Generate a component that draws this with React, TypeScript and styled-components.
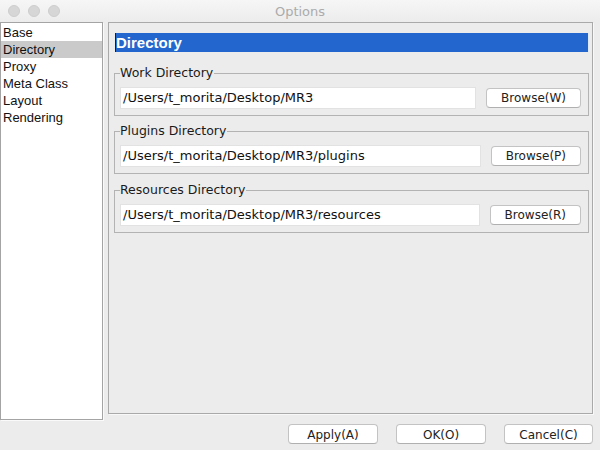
import React from "react";
import styled, { createGlobalStyle } from "styled-components";

const Global = createGlobalStyle`
  html, body { margin: 0; padding: 0; background: #ececec; }
  body { font-family: "DejaVu Sans", "Liberation Sans", sans-serif; }
  * { box-sizing: border-box; }
`;

const Window = styled.div`
  width: 600px;
  height: 450px;
  display: flex;
  flex-direction: column;
  background: #ececec;
  overflow: hidden;
`;

const TitleBar = styled.div`
  height: 22px;
  flex: none;
  display: flex;
  align-items: center;
  position: relative;
  background: linear-gradient(#f6f6f6, #ececec);
`;

const Lights = styled.div`
  display: flex;
  gap: 8px;
  padding-left: 8px;
`;

const Light = styled.span`
  width: 12px;
  height: 12px;
  border-radius: 50%;
  background: #d6d6d6;
  border: 1px solid #cdcdcd;
`;

const Title = styled.div`
  position: absolute;
  left: 0;
  right: 0;
  top: 4px;
  text-align: center;
  font-family: "DejaVu Sans", sans-serif;
  font-size: 13px;
  color: #ababab;
`;

const Body = styled.div`
  flex: none;
  height: 398px;
  display: flex;
  gap: 5px;
`;

const List = styled.ul`
  width: 103px;
  flex: none;
  margin: 0;
  padding: 1px 0 0 0;
  list-style: none;
  background: #fff;
  border: 1px solid #a4a4a4;
  box-shadow: 1px 1px 0 #fafafa;
`;

const Item = styled.li<{ $selected?: boolean }>`
  height: 17px;
  line-height: 17px;
  padding-left: 2px;
  font-family: "Liberation Sans", sans-serif;
  font-size: 13px;
  color: #111;
  background: ${(p) => (p.$selected ? "#cacaca" : "transparent")};
`;

const Panel = styled.div`
  width: 485px;
  height: 392px;
  flex: none;
  border: 1px solid #a9a9a9;
  box-shadow: 1px 1px 0 #f8f8f8;
  padding: 10px 3px 0 5px;
  display: flex;
  flex-direction: column;
`;

const Header = styled.div`
  height: 19px;
  margin-left: 1px;
  background: #2367ce;
  border-left: 1px solid #0c1f45;
  border-right: 1px solid #dfe8f7;
  color: #fff;
  font-family: "Liberation Sans", sans-serif;
  font-weight: bold;
  font-size: 15px;
  line-height: 19px;
  margin-bottom: 14px;
`;

const Group = styled.fieldset<{ $gap?: number }>`
  margin: 0 0 ${(p) => p.$gap ?? 0}px 0;
  padding: 0 7px 6px 5px;
  border: 1px solid #b3b3b3;
  min-width: 0;
`;

const Legend = styled.legend`
  padding: 0 1px 0 0;
  font-size: 12.5px;
  line-height: 14px;
  color: #1a1a1a;
`;

const Row = styled.div`
  display: flex;
  align-items: center;
  gap: 10px;
  margin-top: 7px;
`;

const Field = styled.div`
  flex: 1;
  height: 22px;
  background: #fff;
  border: 1px solid #e2e2e2;
  font-size: 13px;
  line-height: 20px;
  padding-left: 2px;
  color: #111;
  white-space: nowrap;
  overflow: hidden;
`;

const Button = styled.button<{ $w?: number }>`
  height: 20px;
  ${(p) => (p.$w ? `width: ${p.$w}px;` : "padding: 0 14px;")}
  background: #fff;
  border: 1px solid #c3c3c3;
  border-bottom-color: #b0b0b0;
  border-radius: 4px;
  font-family: "DejaVu Sans", sans-serif;
  font-size: 12px;
  color: #222;
  line-height: 18px;
  flex: none;
`;

const Footer = styled.div`
  flex: 1;
  display: flex;
  justify-content: flex-end;
  align-items: flex-start;
  padding: 4px 7px 0 0;
  gap: 18px;
`;

const groups = [
  { label: "Work Directory", path: "/Users/t_morita/Desktop/MR3", btn: "Browse(W)", gap: 8 },
  { label: "Plugins Directory", path: "/Users/t_morita/Desktop/MR3/plugins", btn: "Browse(P)", gap: 9 },
  { label: "Resources Directory", path: "/Users/t_morita/Desktop/MR3/resources", btn: "Browse(R)", gap: 0 },
];

const items = ["Base", "Directory", "Proxy", "Meta Class", "Layout", "Rendering"];

export default function App() {
  return (
    <Window>
      <Global />
      <TitleBar>
        <Lights>
          <Light />
          <Light />
          <Light />
        </Lights>
        <Title>Options</Title>
      </TitleBar>
      <Body>
        <List>
          {items.map((it) => (
            <Item key={it} $selected={it === "Directory"}>
              {it}
            </Item>
          ))}
        </List>
        <Panel>
          <Header>Directory</Header>
          {groups.map((g) => (
            <Group key={g.label} $gap={g.gap}>
              <Legend>{g.label}</Legend>
              <Row>
                <Field>{g.path}</Field>
                <Button>{g.btn}</Button>
              </Row>
            </Group>
          ))}
        </Panel>
      </Body>
      <Footer>
        <Button $w={90}>Apply(A)</Button>
        <Button $w={90}>OK(O)</Button>
        <Button $w={89}>Cancel(C)</Button>
      </Footer>
    </Window>
  );
}
